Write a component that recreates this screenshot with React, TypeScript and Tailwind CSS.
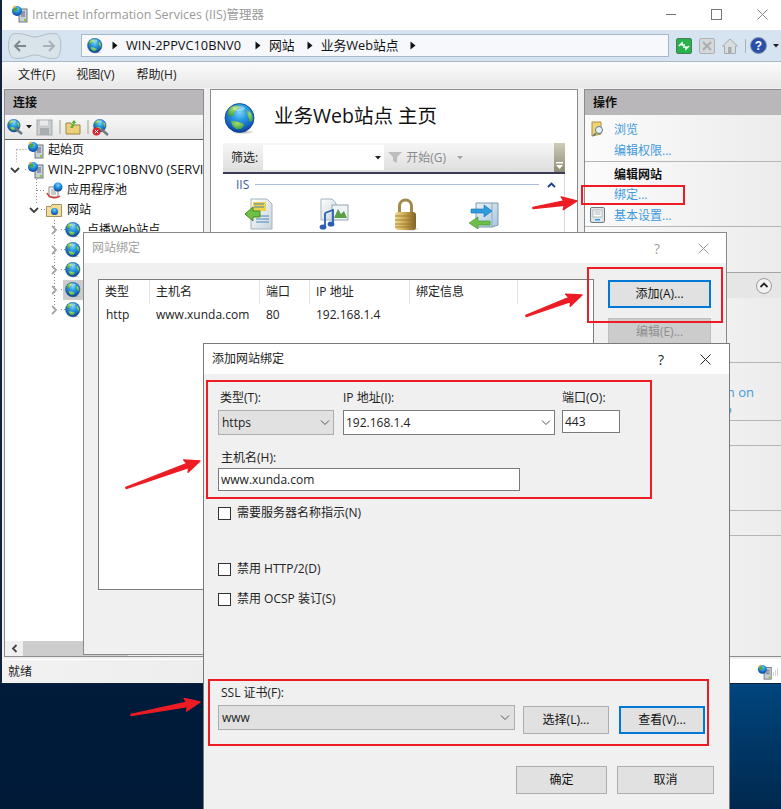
import React from "react";

const F = "font-['Open_Sans','Noto_Sans_CJK_SC',sans-serif]";

function Defs() {
  return (
    <svg className="absolute w-0 h-0">
      <defs>
        <radialGradient id="ocean" cx="0.5" cy="0.3" r="0.78">
          <stop offset="0" stopColor="#7fd4f7" />
          <stop offset="0.35" stopColor="#2a9ae4" />
          <stop offset="0.75" stopColor="#1258b8" />
          <stop offset="1" stopColor="#0a2a78" />
        </radialGradient>
        <radialGradient id="land" cx="0.5" cy="0.3" r="0.8">
          <stop offset="0" stopColor="#a6e06a" />
          <stop offset="1" stopColor="#2c9440" />
        </radialGradient>
        <radialGradient id="shadow" cx="0.5" cy="0.5" r="0.5">
          <stop offset="0" stopColor="#777" stopOpacity="0.6" />
          <stop offset="1" stopColor="#777" stopOpacity="0" />
        </radialGradient>
        <linearGradient id="paper" x1="0" y1="0" x2="1" y2="1">
          <stop offset="0" stopColor="#ffffff" />
          <stop offset="1" stopColor="#c8d4dc" />
        </linearGradient>
        <linearGradient id="gold" x1="0" y1="0" x2="1" y2="0">
          <stop offset="0" stopColor="#f2dc95" />
          <stop offset="0.5" stopColor="#c9a24a" />
          <stop offset="1" stopColor="#7d6226" />
        </linearGradient>
        <linearGradient id="box" x1="0" y1="0" x2="1" y2="1">
          <stop offset="0" stopColor="#e9f2f8" />
          <stop offset="1" stopColor="#a9c6db" />
        </linearGradient>
      </defs>
    </svg>
  );
}

function Globe({ s = 16, className = "" }: { s?: number; className?: string }) {
  return (
    <svg width={s} height={s} viewBox="0 0 32 32" className={className}>
      <ellipse cx="19" cy="29" rx="12" ry="2.5" fill="url(#shadow)" />
      <circle cx="15.5" cy="15" r="14.5" fill="url(#ocean)" stroke="#12408c" strokeWidth="0.8" />
      <path d="M6 5 C10 2 15 2 16 4 C15 7 11 7 10 10 C10 13 7 14 5 13 C3 11 4 7 6 5Z" fill="url(#land)" />
      <path d="M23 7 C26 8 29 12 29 17 C27 20 25 19 25 16 C24 13 22 10 23 7Z" fill="url(#land)" />
      <path d="M7 18 C11 17 16 20 20 21 C20 25 16 27 12 26 C9 24 7 21 7 18Z" fill="url(#land)" />
      <ellipse cx="15" cy="5.5" rx="6" ry="2.5" fill="#ffffff" opacity="0.35" />
    </svg>
  );
}

function ServerGlobe({ s = 18 }: { s?: number }) {
  return (
    <svg width={s} height={s} viewBox="0 0 18 18">
      <rect x="8" y="4" width="8" height="13" fill="#c9d0d6" stroke="#6c7680" />
      <path d="M10 7h4M10 9h4M10 11h4" stroke="#5d6670" />
      <rect x="13" y="14" width="2" height="2" fill="#7ed321" />
      <circle cx="6" cy="6" r="5" fill="url(#ocean)" />
      <path d="M3 3.5 C5 2 7 3 6.5 5 C5.5 7 3 7 2 6Z" fill="#49a53a" />
      <path d="M1.5 2 L4 0.5 L5 2 L2.5 3.5Z" fill="#f0b83c" />
    </svg>
  );
}

function Tri({ className = "" }: { className?: string }) {
  return (
    <svg width="6" height="9" viewBox="0 0 6 9" className={className}>
      <path d="M0.5 0.5 L5.5 4.5 L0.5 8.5Z" fill="#111" />
    </svg>
  );
}

function Chev({ dir }: { dir: "r" | "d" }) {
  return (
    <svg width="10" height="10" viewBox="0 0 10 10">
      {dir === "r" ? (
        <path d="M3 1 L7 5 L3 9" fill="none" stroke="#a6a6a6" strokeWidth="1.8" />
      ) : (
        <path d="M1 3 L5 7 L9 3" fill="none" stroke="#404040" strokeWidth="1.8" />
      )}
    </svg>
  );
}

function ComboChev() {
  return (
    <svg width="10" height="6" viewBox="0 0 10 6">
      <path d="M1 0.5 L5 4.5 L9 0.5" fill="none" stroke="#555" strokeWidth="1" />
    </svg>
  );
}

function TreeRow({
  pad,
  iconMl = "",
  textMl = "",
  chev,
  icon,
  text,
  sel,
  textCls = "",
}: {
  pad: string;
  iconMl?: string;
  textMl?: string;
  chev?: "r" | "d";
  icon: React.ReactNode;
  text?: string;
  sel?: boolean;
  textCls?: string;
}) {
  return (
    <div className={`relative flex h-[20px] items-center whitespace-nowrap text-[12px] text-[#111] ${pad}`}>
      <span className="flex w-[12px] justify-center shrink-0">{chev && <Chev dir={chev} />}</span>
      <span className={`flex w-[20px] h-[20px] items-center justify-center shrink-0 ${iconMl} ${sel ? "bg-[#cccccc]" : ""}`}>{icon}</span>
      {text && <span className={`${textMl} ${textCls}`}>{text}</span>}
    </div>
  );
}

function RedArrow({ x1, y1, x2, y2 }: { x1: number; y1: number; x2: number; y2: number }) {
  const a = Math.atan2(y2 - y1, x2 - x1);
  const L = 15;
  const W = 6.5;
  const bx = x2 - L * Math.cos(a);
  const by = y2 - L * Math.sin(a);
  const nx = -Math.sin(a);
  const ny = Math.cos(a);
  const pts = [
    [x1 + nx * 0.6, y1 + ny * 0.6],
    [bx + nx * 2.2 + Math.cos(a) * 2, by + ny * 2.2 + Math.sin(a) * 2],
    [bx + nx * W, by + ny * W],
    [x2, y2],
    [bx - nx * W, by - ny * W],
    [bx - nx * 2.2 + Math.cos(a) * 2, by - ny * 2.2 + Math.sin(a) * 2],
    [x1 - nx * 0.6, y1 - ny * 0.6],
  ]
    .map((p) => p.join(","))
    .join(" ");
  return <polygon points={pts} fill="#ed1c24" stroke="#ed1c24" strokeWidth="1.4" strokeLinejoin="round" />;
}

function Btn({ children, focus, disabled, className = "" }: { children: React.ReactNode; focus?: boolean; disabled?: boolean; className?: string }) {
  return (
    <div
      className={`flex items-center justify-center text-[12px] ${
        focus ? "border-2 border-[#0078d7] bg-[#e1e1e1] text-[#111]" : disabled ? "border border-[#bfbfbf] bg-[#cccccc] text-[#8f8f8f]" : "border border-[#adadad] bg-[#e1e1e1] text-[#111]"
      } ${className}`}
    >
      {children}
    </div>
  );
}

function Check({ label, className = "" }: { label: string; className?: string }) {
  return (
    <div className={`flex items-center text-[12px] text-[#222] ${className}`}>
      <span className="w-[13px] h-[13px] border border-[#333] bg-white shrink-0" />
      <span className="ml-[6px]">{label}</span>
    </div>
  );
}

function Main() {
  return (
    <div className="absolute left-0 top-0 w-[781px] h-[684px] flex flex-col border-l-[2px] border-b border-[#10223c] bg-[#f0f0f0]">
      {/* title */}
      <div className="h-[30px] bg-white flex items-center shrink-0">
        <span className="ml-[9px] mt-[-3px]">
          <ServerGlobe s={18} />
        </span>
        <span className="ml-[3px] text-[12.5px] text-[#9a9a9a]">Internet Information Services (IIS)管理器</span>
        <div className="ml-auto flex items-center">
          <svg width="10" height="10" viewBox="0 0 10 10" className="mr-[35px] mt-[-2px]"><path d="M0 5.5h10" stroke="#777" /></svg>
          <svg width="11" height="11" viewBox="0 0 11 11" className="mr-[35px] mt-[-2px]"><rect x="0.5" y="0.5" width="10" height="10" fill="none" stroke="#777" /></svg>
          <svg width="11" height="11" viewBox="0 0 11 11" className="mr-[13px] mt-[-2px]"><path d="M0.5 0.5L10.5 10.5M10.5 0.5L0.5 10.5" stroke="#888" /></svg>
        </div>
      </div>
      {/* address */}
      <div className="h-[32px] bg-[#d6e4f2] border-b border-[#a9b9c6] flex items-center shrink-0">
        <svg width="55" height="26" viewBox="0 0 55 26" className="ml-[5px]">
          <path d="M6 1 C16 -1 22 4 28 4 C34 4 40 -1 50 1 C55 3 55 22 50 25 C40 27 34 22 28 22 C22 22 16 27 6 25 C0 22 0 3 6 1Z" fill="#d9e3ea" stroke="#b4bdc4" />
          <path d="M19 13H8M13 8L8 13L13 18" fill="none" stroke="#7d8790" strokeWidth="2" />
          <path d="M36 13H47M42 8L47 13L42 18" fill="none" stroke="#a9b2b9" strokeWidth="2" />
        </svg>
        <div className="ml-[19px] w-[588px] h-[23px] border border-[#a7b8c8] bg-[#f6f8fb] flex items-center text-[12.8px] text-[#111]">
          <Globe s={16} className="ml-[5px]" />
          <Tri className="ml-[9px]" />
          <span className="ml-[8px]">WIN-2PPVC10BNV0</span>
          <Tri className="ml-[14px]" />
          <span className="ml-[8px]">网站</span>
          <Tri className="ml-[12px]" />
          <span className="ml-[8px]">业务Web站点</span>
          <Tri className="ml-[11px]" />
        </div>
        <div className="ml-[7px] flex items-center">
          <svg width="16" height="16" viewBox="0 0 16 16">
            <rect x="0.5" y="0.5" width="15" height="15" rx="1.5" fill="#25b34a" stroke="#4d7a58" />
            <path d="M3 8 L6 5 L6 7 L9 7 M13 8 L10 11 L10 9 L7 9" fill="none" stroke="#fff" strokeWidth="1.5" />
          </svg>
          <svg width="16" height="16" viewBox="0 0 16 16" className="ml-[7px]">
            <rect x="0.5" y="0.5" width="15" height="15" rx="1.5" fill="#d5d8da" stroke="#adb2b5" />
            <path d="M4 4L12 12M12 4L4 12" stroke="#a8adb0" strokeWidth="2" />
          </svg>
          <svg width="16" height="16" viewBox="0 0 16 16" className="ml-[7px]">
            <path d="M0.5 8 L8 1 L15.5 8 L13.5 8 L13.5 15.5 L2.5 15.5 L2.5 8Z" fill="#d9dcdd" stroke="#a6aaad" />
            <rect x="6" y="9" width="3.5" height="6.5" fill="#a9adb0" />
          </svg>
          <span className="ml-[7px] w-px h-[14px] bg-[#a9b3bb]" />
          <svg width="17" height="17" viewBox="0 0 17 17" className="ml-[4px]">
            <circle cx="8.5" cy="8.5" r="8" fill="#2a4fa8" stroke="#8795ad" />
            <text x="8.5" y="13" textAnchor="middle" fontSize="12" fontWeight="700" fill="#fff" fontFamily="Liberation Sans">?</text>
          </svg>
          <svg width="6" height="4" viewBox="0 0 6 4" className="ml-[6px]"><path d="M0 0H6L3 3.5Z" fill="#222" /></svg>
        </div>
      </div>
      {/* menu */}
      <div className="h-[26px] flex items-center text-[12px] text-[#222] bg-gradient-to-b from-[#fbfbfb] to-[#e9e8e8] shrink-0">
        <span className="ml-[16px]">文件(F)</span>
        <span className="ml-[21px]">视图(V)</span>
        <span className="ml-[22px]">帮助(H)</span>
      </div>
      {/* body */}
      <div className="flex-1 flex min-h-0 pt-px">
        {/* left */}
        <div className="ml-[2px] w-[200px] h-[568px] border border-[#8c8c8c] bg-white flex flex-col relative shrink-0">
          <div className="h-[25px] bg-[#b9b7b9] flex items-center pl-[8px] text-[12px] font-bold text-[#111] shrink-0">连接</div>
          <div className="h-[25px] bg-gradient-to-b from-[#f7f7f7] to-[#e6e6e6] border-b border-[#5c5c5c] flex items-center pl-[2px] shrink-0">
            <span className="relative w-[16px] h-[16px]">
              <Globe s={14} className="absolute left-0 top-0" />
              <svg width="9" height="8" viewBox="0 0 9 8" className="absolute right-0 bottom-0"><path d="M1 1L8 7" stroke="#6d7a82" strokeWidth="2.4" /></svg>
            </span>
            <svg width="6" height="4" viewBox="0 0 6 4" className="ml-[3px]"><path d="M0 0H6L3 3.5Z" fill="#222" /></svg>
            <svg width="17" height="17" viewBox="0 0 17 17" className="ml-[4px]">
              <rect x="1" y="1" width="15" height="15" fill="#c9cdd0" stroke="#a5a9ac" />
              <rect x="4" y="1.5" width="8" height="5" fill="#e8eaeb" />
              <rect x="4" y="9" width="9" height="7" fill="#a9adb0" />
            </svg>
            <span className="ml-[6px] w-[2px] h-[14px] bg-[#c9c9b8]" />
            <svg width="16" height="16" viewBox="0 0 16 16" className="ml-[4px]">
              <path d="M1 4H6L7 6H15V15H1Z" fill="#edd07a" stroke="#9c8640" />
              <path d="M5 9 L8 4 L6.5 4 L9 1 L11.5 4 L10 4 L8 9Z" fill="#5fb43b" />
            </svg>
            <span className="ml-[6px] w-[2px] h-[14px] bg-[#c9c9b8]" />
            <span className="relative ml-[3px] w-[16px] h-[17px]">
              <Globe s={14} className="absolute left-[1px] top-0" />
              <svg width="9" height="8" viewBox="0 0 9 8" className="absolute right-[-1px] bottom-0"><path d="M1 1L8 7" stroke="#6d7a82" strokeWidth="2.4" /></svg>
              <svg width="9" height="9" viewBox="0 0 9 9" className="absolute left-0 bottom-0">
                <circle cx="4.5" cy="4.5" r="4" fill="#d4252f" />
                <path d="M2.8 2.8L6.2 6.2M6.2 2.8L2.8 6.2" stroke="#fff" />
              </svg>
            </span>
          </div>
          <div className="relative flex-1 overflow-hidden">
            <svg className="absolute left-0 top-0" width="120" height="190">
              <path d="M11.5 9.5H22M11.5 9.5V22M20 29.5H21M31.5 39V50.5H41M31.5 50V63M36 69.5H41M49.5 80V170M56 89.5H60M56 109.5H60M56 129.5H60M56 149.5H60M56 169.5H60" fill="none" stroke="#8a8a8a" strokeDasharray="1 2" />
            </svg>
            <TreeRow pad="pl-[9px]" icon={<ServerGlobe s={18} />} text="起始页" textMl="ml-[2px]" />
            <TreeRow pad="pl-[4px]" iconMl="ml-[5px]" chev="d" icon={<ServerGlobe s={18} />} text="WIN-2PPVC10BNV0 (SERVI" textMl="ml-[2px]" textCls="text-[12.8px]" />
            <TreeRow
              pad="pl-[27px]"
              icon={
                <svg width="17" height="17" viewBox="0 0 17 17">
                  <rect x="3" y="5" width="9" height="10" fill="#f4f4f4" stroke="#8c8c8c" />
                  <path d="M5 8h5M5 10h5M5 12h5" stroke="#a0a0a0" />
                  <path d="M1 11 C3 16 10 17 14 14" fill="none" stroke="#d33a2c" strokeWidth="1.5" />
                  <circle cx="12" cy="5" r="4.5" fill="url(#ocean)" />
                </svg>
              }
              text="应用程序池"
              textMl="ml-[3px]"
            />
            <TreeRow
              pad="pl-[23px]"
              iconMl="ml-[4px]"
              chev="d"
              icon={
                <svg width="16" height="14" viewBox="0 0 16 14">
                  <path d="M0.5 3.5H5L6 1.5H15.5V13.5H0.5Z" fill="#f4dd9b" stroke="#a4925a" />
                  <circle cx="8.5" cy="8.5" r="3.5" fill="url(#ocean)" />
                </svg>
              }
              text="网站"
              textMl="ml-[3px]"
            />
            <TreeRow pad="pl-[43px]" iconMl="ml-[3px]" chev="r" icon={<Globe s={16} />} text="点播Web站点" textMl="ml-[4px]" />
            <TreeRow pad="pl-[43px]" iconMl="ml-[3px]" chev="r" icon={<Globe s={16} />} />
            <TreeRow pad="pl-[43px]" iconMl="ml-[3px]" chev="r" icon={<Globe s={16} />} />
            <TreeRow pad="pl-[43px]" iconMl="ml-[3px]" chev="r" icon={<Globe s={16} />} sel />
            <TreeRow pad="pl-[43px]" iconMl="ml-[3px]" chev="r" icon={<Globe s={16} />} />
          </div>
          <div className="h-[15px] bg-[#f0f0f0] flex shrink-0">
            <span className="w-[18px] flex items-center justify-center">
              <svg width="7" height="9" viewBox="0 0 7 9"><path d="M5.5 1L2 4.5L5.5 8" fill="none" stroke="#444" strokeWidth="1.8" /></svg>
            </span>
            <span className="w-[105px] bg-[#cdcdcd]" />
          </div>
        </div>
        {/* center */}
        <div className="ml-[6px] w-[368px] h-[568px] border border-[#8c8c8c] bg-white flex flex-col shrink-0">
          <div className="flex items-center pl-[13px] pt-[5px] h-[53px] shrink-0">
            <Globe s={32} />
            <span className="ml-[18px] mt-[-6px] text-[19.5px] text-[#111] leading-none">业务Web站点 主页</span>
          </div>
          <div className="ml-[12px] w-[342px] h-[31px] bg-gradient-to-b from-[#f6f6f6] to-[#dedede] border-b-[2px] border-[#3b3b55] flex items-center text-[12px] text-[#222] relative shrink-0">
            <span className="ml-[8px]">筛选:</span>
            <div className="ml-[5px] w-[121px] h-[25px] bg-white flex items-center justify-end pr-[3px]">
              <svg width="6" height="4" viewBox="0 0 6 4"><path d="M0 0H6L3 3.5Z" fill="#222" /></svg>
            </div>
            <svg width="14" height="13" viewBox="0 0 14 13" className="ml-[4px]"><path d="M0 1H14L9 6V12L5 10V6Z" fill="#bdbdbd" /></svg>
            <span className="ml-[4px] text-[#8a8a8a]">开始(G)</span>
            <svg width="6" height="4" viewBox="0 0 6 4" className="ml-[11px]"><path d="M0 0H6L3 3.5Z" fill="#a6a6a6" /></svg>
            <span className="ml-auto w-[11px] h-[29px] bg-gradient-to-b from-[#cfcdb8] to-[#8f8d78] flex items-end justify-center pb-[3px]">
              <svg width="7" height="7" viewBox="0 0 7 7"><path d="M0 0H7V1.5H0ZM0 3H7L3.5 7Z" fill="#fff" /></svg>
            </span>
          </div>
          <div className="ml-[12px] w-[342px] flex-1 border-r border-[#d9d9d9]">
            <div className="flex items-center h-[21px] pl-[13px] text-[12px] text-[#3a5a9a]">
              IIS
              <span className="ml-[6px] w-[284px] h-px bg-[#a9bde0]" />
              <svg width="9" height="6" viewBox="0 0 9 6" className="ml-[8px]"><path d="M1 5L4.5 1.5L8 5" fill="none" stroke="#1b3a8a" strokeWidth="1.8" /></svg>
            </div>
            <div className="flex pt-[3px] pl-[21px] items-start">
              <svg width="32" height="32" viewBox="0 0 32 32">
                <path d="M7 1H23L28 6V31H7Z" fill="url(#paper)" stroke="#9fb3c0" />
                <rect x="9" y="4" width="13" height="9" fill="#ecd24b" />
                <path d="M10 6h10M10 9h10M12 18h13M12 21h13M12 24h13" stroke="#4a86b8" />
                <path d="M1 16L9 9V13H16V19H9V23Z" fill="#6fbf44" stroke="#3f8a24" />
              </svg>
              <svg width="30" height="32" viewBox="0 0 30 32" className="ml-[43px]">
                <path d="M2 1H13L17 5V22H2Z" fill="url(#paper)" stroke="#9fb3c0" />
                <rect x="13" y="7" width="16" height="15" fill="#eef4f7" stroke="#94a7b2" />
                <path d="M15 20L19 11L22 16L25 13L28 20Z" fill="#5ca045" />
                <path d="M6 15V28M6 15L14 12V25" fill="none" stroke="#2d5eb3" strokeWidth="1.8" />
                <ellipse cx="4" cy="29" rx="3.4" ry="2.6" fill="#2d5eb3" />
                <ellipse cx="12" cy="26" rx="3.4" ry="2.6" fill="#2d5eb3" />
              </svg>
              <svg width="26" height="34" viewBox="0 0 26 34" className="ml-[45px]">
                <ellipse cx="16" cy="31" rx="10" ry="2" fill="url(#shadow)" />
                <path d="M5.5 15V8C5.5 0 17.5 0 17.5 8V15" fill="none" stroke="#9f8a4a" strokeWidth="3" />
                <rect x="1" y="14" width="21" height="18" rx="3" fill="url(#gold)" />
                <path d="M1 18H22M1 22H22M1 26H22M1 29H22" stroke="#8d7130" strokeWidth="0.8" />
              </svg>
              <svg width="32" height="30" viewBox="0 0 32 30" className="ml-[48px] mt-[3px]">
                <path d="M8 2H30V24L24 26H8Z" fill="url(#box)" stroke="#7f99ad" />
                <path d="M24 2V26" stroke="#8fa9bd" />
                <path d="M3 8H16V4L24 10L16 16V12H3Z" fill="#2f9ce0" stroke="#1a6ea8" strokeWidth="0.6" />
                <path d="M22 20H10V16L1 22L10 28V24H22Z" fill="#6cc04a" stroke="#3e8c28" strokeWidth="0.6" />
              </svg>
            </div>
          </div>
        </div>
        {/* right */}
        <div className="ml-[6px] flex-1 h-[568px] border-l border-t border-b border-[#8c8c8c] bg-gradient-to-r from-[#fbfbfb] to-[#ececec] flex flex-col text-[12px] text-[#3f9ade]">
          <div className="h-[25px] bg-[#b9b7b9] flex items-center pl-[8px] font-bold text-[#111] shrink-0">操作</div>
          <div className="h-[46px] pt-[5px] relative shrink-0">
            <svg width="15" height="16" viewBox="0 0 15 16" className="absolute left-[6px] top-[6px]">
              <path d="M1 1H10V13L1 15Z" fill="#f1d277" stroke="#a88f3a" />
              <circle cx="8" cy="9" r="3.5" fill="#e5eff5" stroke="#5d7c8c" />
              <path d="M5 12L2 15" stroke="#5d7c8c" strokeWidth="1.6" />
            </svg>
            <div className="pl-[29px] h-[20px] flex items-center">浏览</div>
            <div className="pl-[29px] h-[21px] flex items-center">编辑权限...</div>
          </div>
          <div className="border-t border-[#b5b5b5] pt-[3px] h-[65px] relative shrink-0">
            <div className="pl-[29px] h-[20px] flex items-center font-bold text-[#111]">编辑网站</div>
            <div className="pl-[29px] h-[20px] flex items-center">绑定...</div>
            <div className="pl-[29px] h-[21px] flex items-center">基本设置...</div>
            <svg width="15" height="16" viewBox="0 0 15 16" className="absolute left-[5px] top-[45px]">
              <rect x="0.5" y="0.5" width="14" height="15" rx="1.5" fill="#dfe5e8" stroke="#6d7a82" />
              <rect x="3" y="3" width="9" height="7" fill="#fff" stroke="#8a969d" strokeWidth="0.6" />
              <path d="M4.5 5h6M4.5 7h6" stroke="#8a969d" strokeWidth="0.7" />
              <rect x="5" y="12" width="5" height="1.5" fill="#2f9ce0" />
            </svg>
          </div>
          <div className="border-t border-[#b5b5b5] h-[46px] shrink-0" />
          <div className="h-[26px] bg-[#e6e6e6] border-t border-[#a5a5a5] flex items-center justify-end pr-[9px] shrink-0">
            <svg width="16" height="16" viewBox="0 0 16 16">
              <circle cx="8" cy="8" r="7.5" fill="#f2f2f2" stroke="#9a9a9a" />
              <path d="M4.5 9L8 5.5L11.5 9" fill="none" stroke="#222" strokeWidth="1.8" />
            </svg>
          </div>
          <div className="h-[65px] border-b border-[#b5b5b5] shrink-0" />
          <div className="h-[58px] border-b border-[#b5b5b5] pt-[22px] text-[13px] text-[#3f9ade] shrink-0">
            <div className="text-right pr-[27px] leading-[15px]">n on</div>
            <div className="pl-[139px] mt-[2px] leading-[15px]">o</div>
          </div>
          <div className="h-[25px] border-b border-[#b5b5b5] shrink-0" />
          <div className="h-[65px] border-b border-[#b5b5b5] shrink-0" />
          <div className="h-[25px] border-b border-[#b5b5b5] shrink-0" />
        </div>
      </div>
      {/* status */}
      <div className="h-[24px] mt-auto mb-0 flex items-center text-[12px] text-[#222] bg-gradient-to-r from-[#f2f2f2] to-[#e0e0e0] relative shrink-0 border-t border-[#fff]">
        <span className="ml-[6px] mt-px">就绪</span>
        <div className="absolute right-0 top-0 h-full w-[60px] bg-white flex items-center justify-end pr-[2px]">
          <ServerGlobe s={16} />
          <svg width="6" height="8" viewBox="0 0 6 8"><path d="M4 1h1M2 3h1M4 3h1M0 5h1M2 5h1M4 5h1M0 7h1M2 7h1M4 7h1" stroke="#aaa" /></svg>
        </div>
      </div>
    </div>
  );
}

function Bindings() {
  return (
    <div className="absolute left-[83px] top-[232px] w-[644px] h-[423px] border border-[#8a8a8a] bg-[#f0f0f0] flex flex-col">
      <div className="h-[30px] bg-white flex items-center text-[12px] text-[#a0a0a0] shrink-0">
        <span className="ml-[8px]">网站绑定</span>
        <span className="ml-auto mr-[38px] text-[14px]">?</span>
        <svg width="11" height="11" viewBox="0 0 11 11" className="mr-[17px]"><path d="M0.5 0.5L10.5 10.5M10.5 0.5L0.5 10.5" stroke="#9a9a9a" /></svg>
      </div>
      <div className="flex pl-[14px] pt-[16px] items-start">
        <div className="w-[496px] h-[311px] border border-[#7d7d7d] bg-white text-[12px] text-[#222] shrink-0">
          <div className="flex h-[24px] items-center">
            <span className="w-[51px] pl-[6px] border-r border-[#e3e3e3] h-full flex items-center">类型</span>
            <span className="w-[110px] pl-[6px] border-r border-[#e3e3e3] h-full flex items-center">主机名</span>
            <span className="w-[50px] pl-[6px] border-r border-[#e3e3e3] h-full flex items-center">端口</span>
            <span className="w-[100px] pl-[6px] border-r border-[#e3e3e3] h-full flex items-center">IP 地址</span>
            <span className="w-[108px] pl-[6px] border-r border-[#e3e3e3] h-full flex items-center">绑定信息</span>
          </div>
          <div className="flex h-[21px] items-center">
            <span className="w-[51px] pl-[7px]">http</span>
            <span className="w-[110px] pl-[6px]">www.xunda.com</span>
            <span className="w-[50px] pl-[6px]">80</span>
            <span className="w-[100px] pl-[6px]">192.168.1.4</span>
          </div>
        </div>
        <div className="ml-[14px] w-[103px] flex flex-col gap-[10px] pt-px">
          <Btn focus className="h-[28px]">添加(A)...</Btn>
          <Btn disabled className="h-[27px]">编辑(E)...</Btn>
        </div>
      </div>
    </div>
  );
}

function AddBinding() {
  return (
    <div className="absolute left-[203px] top-[343px] w-[527px] h-[466px] border-l border-t border-r border-[#7a7a7a] bg-[#f0f0f0] flex flex-col text-[12px] text-[#222]">
      <div className="h-[30px] bg-white flex items-center text-[12px] text-[#222] shrink-0">
        <span className="ml-[8px]">添加网站绑定</span>
        <span className="ml-auto mr-[36px] text-[14px] text-[#222]">?</span>
        <svg width="11" height="11" viewBox="0 0 11 11" className="mr-[18px]"><path d="M0.5 0.5L10.5 10.5M10.5 0.5L0.5 10.5" stroke="#222" /></svg>
      </div>
      <div className="pl-[14px] pt-[15px] flex flex-col">
        <div className="flex h-[47px]">
          <div className="w-[116px] flex flex-col">
            <span className="pl-[2px] h-[21px] leading-[17px]">类型(T):</span>
            <div className="h-[25px] border border-[#adadad] bg-[#e1e1e1] flex items-center pl-[3px] pr-[3px] justify-between">
              https
              <ComboChev />
            </div>
          </div>
          <div className="ml-[9px] w-[212px] flex flex-col">
            <span className="h-[21px] leading-[17px]">IP 地址(I):</span>
            <div className="h-[25px] border border-[#7a7a7a] bg-white flex items-center pl-[2px] pr-[3px] justify-between">
              192.168.1.4
              <ComboChev />
            </div>
          </div>
          <div className="ml-[7px] w-[58px] flex flex-col">
            <span className="h-[21px] leading-[17px]">端口(O):</span>
            <div className="h-[23px] border border-[#7a7a7a] bg-white flex items-center pl-[2px]">443</div>
          </div>
        </div>
        <span className="pl-[3px] mt-[13px] h-[17px] leading-[17px]">主机名(H):</span>
        <div className="mt-[2px] w-[302px] h-[23px] border border-[#7a7a7a] bg-white flex items-center pl-[2px]">www.xunda.com</div>
        <Check label="需要服务器名称指示(N)" className="mt-[13px]" />
        <Check label="禁用 HTTP/2(D)" className="mt-[38px]" />
        <Check label="禁用 OCSP 装订(S)" className="mt-[12px]" />
        <span className="pl-[3px] mt-[76px] h-[18px] leading-[18px]">SSL 证书(F):</span>
        <div className="mt-[3px] flex items-start">
          <div className="w-[297px] h-[25px] border border-[#adadad] bg-[#e1e1e1] flex items-center pl-[3px] pr-[4px] justify-between">
            www
            <ComboChev />
          </div>
          <Btn className="ml-[8px] mt-px w-[86px] h-[28px]">选择(L)...</Btn>
          <Btn focus className="ml-[10px] mt-px w-[86px] h-[28px]">查看(V)...</Btn>
        </div>
        <div className="mt-[32px] flex ml-[298px]">
          <Btn className="w-[91px] h-[28px]">确定</Btn>
          <Btn className="ml-[10px] w-[97px] h-[28px]">取消</Btn>
        </div>
      </div>
    </div>
  );
}

export default function App() {
  return (
    <div className={`relative w-[781px] h-[809px] overflow-hidden bg-gradient-to-b from-[#00234a] to-[#001a38] ${F}`}>
      <Defs />
      <div className="absolute left-[730px] top-[683px] w-[51px] h-[126px] bg-gradient-to-b from-[#00467f] to-[#00284e]" />
      <Main />
      <Bindings />
      <AddBinding />
      <div className="absolute left-[581px] top-[185px] w-[104px] h-[20px] border-[2px] border-[#ed1c24]" />
      <div className="absolute left-[587px] top-[267px] w-[136px] h-[56px] border-[2px] border-[#ed1c24]" />
      <div className="absolute left-[206px] top-[380px] w-[446px] h-[119px] border-[2px] border-[#ed1c24]" />
      <div className="absolute left-[208px] top-[679px] w-[501px] h-[67px] border-[2px] border-[#ed1c24]" />
      <svg className="absolute left-0 top-0 pointer-events-none" width="781" height="809">
        <RedArrow x1={533} y1={208} x2={577} y2={201} />
        <RedArrow x1={526} y1={316} x2={582} y2={295} />
        <RedArrow x1={126} y1={488} x2={200} y2={461} />
        <RedArrow x1={131} y1={715} x2={200} y2={702} />
      </svg>
    </div>
  );
}
